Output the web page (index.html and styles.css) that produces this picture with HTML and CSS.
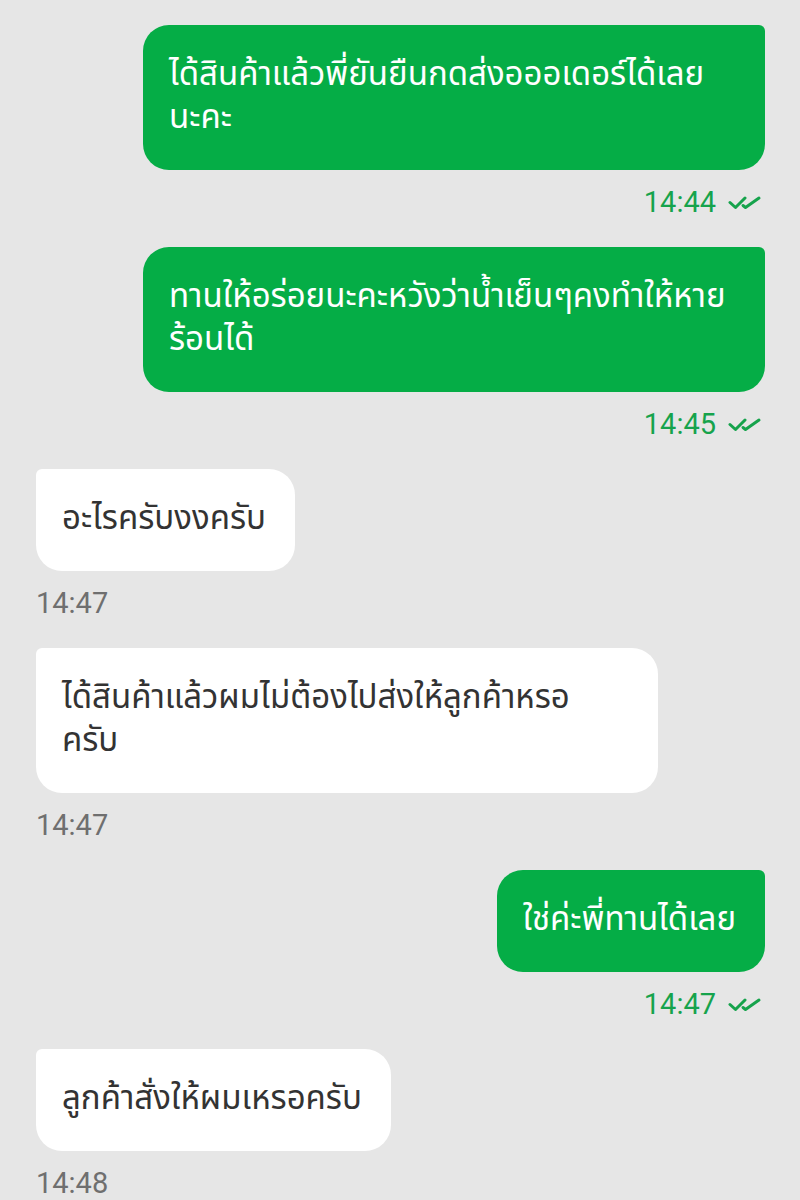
FILE: index.html
```html
<!DOCTYPE html>
<html lang="th">

<head>
    <meta charset="UTF-8" />
    <meta name="viewport" content="width=device-width, initial-scale=1.0" />
    <title>Chat</title>
    <link rel="stylesheet" href="styles.css">
</head>

<body>
    <div class="chat">
        <div class="msg out">
            <div class="bubble wide">ได้สินค้าแล้วพี่ยันยืนกดส่งอออเดอร์ได้เลย<br>นะคะ</div>
            <div class="time">14:44
                <svg class="ticks" viewBox="0 0 34 14"><polyline points="2,7 7.5,12 17,2.5" /><polyline points="15,10 17.5,12 31,2.5" /></svg>
            </div>
        </div>

        <div class="msg out">
            <div class="bubble wide">ทานให้อร่อยนะคะหวังว่าน้ำเย็นๆคงทำให้หาย<br>ร้อนได้</div>
            <div class="time">14:45
                <svg class="ticks" viewBox="0 0 34 14"><polyline points="2,7 7.5,12 17,2.5" /><polyline points="15,10 17.5,12 31,2.5" /></svg>
            </div>
        </div>

        <div class="msg in">
            <div class="bubble">อะไรครับงงครับ</div>
            <div class="time">14:47</div>
        </div>

        <div class="msg in">
            <div class="bubble wide">ได้สินค้าแล้วผมไม่ต้องไปส่งให้ลูกค้าหรอ<br>ครับ</div>
            <div class="time">14:47</div>
        </div>

        <div class="msg out">
            <div class="bubble">ใช่ค่ะพี่ทานได้เลย</div>
            <div class="time">14:47
                <svg class="ticks" viewBox="0 0 34 14"><polyline points="2,7 7.5,12 17,2.5" /><polyline points="15,10 17.5,12 31,2.5" /></svg>
            </div>
        </div>

        <div class="msg in">
            <div class="bubble">ลูกค้าสั่งให้ผมเหรอครับ</div>
            <div class="time">14:48</div>
        </div>
    </div>
</body>

</html>
```

FILE: styles.css
```css
body {
    margin: 0;
    background: #e6e6e6;
    font-family: "Noto Sans Thai", "Noto Sans", "DejaVu Sans", sans-serif;
}

.chat {
    display: flex;
    flex-direction: column;
    gap: 25px;
    padding: 25px 35px 0 36px;
}

.msg {
    display: flex;
    flex-direction: column;
}

.msg.out {
    align-items: flex-end;
}

.msg.in {
    align-items: flex-start;
}

.bubble {
    padding: 29px 29px 30px 26px;
    font-size: 33px;
    line-height: 43px;
    border-radius: 26px;
    white-space: nowrap;
}

.bubble.wide {
    box-sizing: border-box;
    width: 622px;
}

.out .bubble {
    background: #05ad46;
    color: #fff;
    border-top-right-radius: 6px;
}

.in .bubble {
    background: #fff;
    color: #333;
    border-top-left-radius: 6px;
}

.time {
    margin-top: 12px;
    height: 40px;
    display: flex;
    align-items: center;
    gap: 12px;
    font-family: Roboto, "Noto Sans", sans-serif;
    font-size: 29px;
}

.out .time {
    color: #16a34c;
    padding-right: 3px;
}

.in .time {
    color: #6f6f6f;
}

.ticks {
    width: 34px;
    height: 15px;
    fill: none;
    stroke: #16a34c;
    stroke-width: 3;
    stroke-linecap: round;
    stroke-linejoin: round;
}
```
